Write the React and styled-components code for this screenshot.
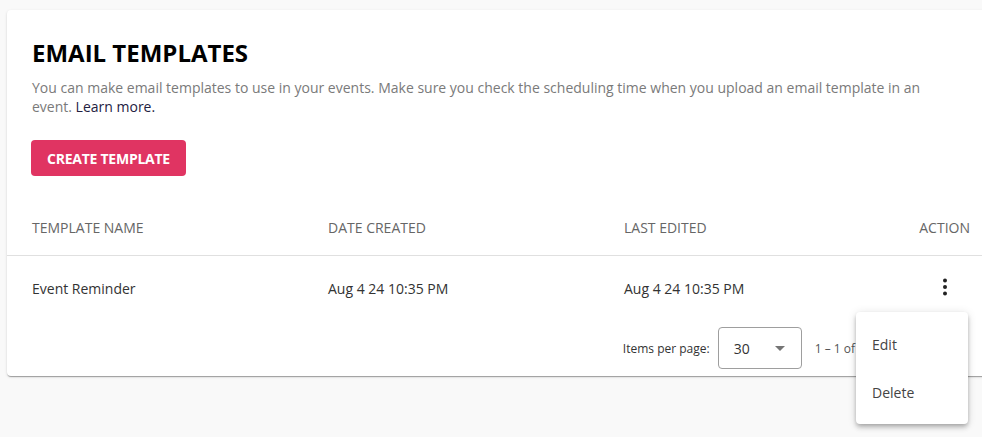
import React from 'react';
import styled, { createGlobalStyle } from 'styled-components';

const GlobalStyle = createGlobalStyle`
  html, body {
    margin: 0;
    padding: 0;
    overflow: hidden;
    background: #f9f9f9;
    font-family: 'Open Sans', 'Liberation Sans', sans-serif;
  }
`;

const Page = styled.div`
  padding: 10px 0 0 7px;
  min-height: 437px;
  box-sizing: border-box;
`;

const Card = styled.div`
  position: relative;
  width: 988px;
  background: #fff;
  border-radius: 4px;
  box-shadow: 0 2px 1px -1px rgba(0, 0, 0, 0.2), 0 1px 1px 0 rgba(0, 0, 0, 0.14),
    0 1px 3px 0 rgba(0, 0, 0, 0.12);
`;

const Intro = styled.div`
  padding: 26px 25px 0 25px;
`;

const Title = styled.h1`
  margin: 0;
  font-size: 24px;
  line-height: 33px;
  font-weight: 700;
  color: #000;
`;

const Description = styled.p`
  margin: 9px 0 0 0;
  max-width: 900px;
  font-size: 14px;
  line-height: 19px;
  color: #7a7a7a;
`;

const LearnMore = styled.a`
  color: #23213f;
  text-decoration: none;
  cursor: pointer;
`;

const PrimaryButton = styled.button`
  margin: 24px 0 0 -1px;
  height: 36px;
  padding: 0 16px;
  border: none;
  border-radius: 4px;
  background: #e03462;
  color: #fff;
  font-family: inherit;
  font-size: 14px;
  font-weight: 700;
  letter-spacing: -0.25px;
  cursor: pointer;
`;

const Table = styled.div`
  margin-top: 24px;
`;

const Row = styled.div`
  display: grid;
  grid-template-columns: 296px 296px 296px 1fr;
  align-items: center;
  height: ${(p) => p.height}px;
  border-bottom: ${(p) => (p.divider ? '1px solid #e0e0e0' : 'none')};
`;

const Cell = styled.div`
  padding: 0 ${(p) => (p.right ? '25px' : '0')} 0 ${(p) => (p.right ? '0' : '25px')};
  text-align: ${(p) => (p.right ? 'right' : 'left')};
  font-size: 14px;
  color: ${(p) => (p.head ? '#666' : '#333')};
  text-transform: ${(p) => (p.head ? 'uppercase' : 'none')};
`;

const KebabButton = styled.button`
  display: inline-flex;
  align-items: center;
  justify-content: center;
  width: 40px;
  height: 40px;
  margin: -2px 5px 0 0;
  border: none;
  background: transparent;
  cursor: pointer;
  padding: 0;
`;

const Paginator = styled.div`
  display: flex;
  align-items: center;
  justify-content: flex-end;
  height: 56px;
  padding-right: 18px;
  font-size: 12px;
  color: #333;
`;

const PageSizeLabel = styled.span`
  margin-right: 8px;
`;

const Select = styled.div`
  display: flex;
  align-items: center;
  justify-content: space-between;
  box-sizing: border-box;
  width: 84px;
  height: 42px;
  padding: 0 16px 0 15px;
  border: 1px solid #9e9e9e;
  border-radius: 4px;
  font-size: 14px;
  color: #333;
`;

const Arrow = styled.span`
  width: 0;
  height: 0;
  border-left: 5px solid transparent;
  border-right: 5px solid transparent;
  border-top: 5px solid #757575;
`;

const RangeLabel = styled.span`
  margin: 0 32px 0 13px;
  color: #555;
`;

const NavButton = styled.button`
  display: inline-flex;
  align-items: center;
  justify-content: center;
  width: 40px;
  height: 40px;
  padding: 0;
  border: none;
  background: transparent;
  color: rgba(0, 0, 0, 0.26);
`;

const Menu = styled.div`
  position: absolute;
  top: 302px;
  right: 27px;
  width: 112px;
  padding: 8px 0;
  background: #fff;
  border-radius: 4px;
  box-shadow: 0 2px 4px -1px rgba(0, 0, 0, 0.2), 0 4px 5px 0 rgba(0, 0, 0, 0.14),
    0 1px 10px 0 rgba(0, 0, 0, 0.12);
  z-index: 2;
`;

const MenuItem = styled.div`
  display: flex;
  align-items: center;
  height: 48px;
  padding: 0 16px;
  font-size: 14px;
  color: #444;
  cursor: pointer;
`;

const columns = ['Template Name', 'Date Created', 'Last Edited'];

const templates = [
  { name: 'Event Reminder', created: 'Aug 4 24 10:35 PM', edited: 'Aug 4 24 10:35 PM' },
];

const MoreIcon = () => (
  <svg width="20" height="24" viewBox="0 0 20 24">
    <circle cx="10" cy="5.5" r="2" fill="#222" />
    <circle cx="10" cy="12" r="2" fill="#222" />
    <circle cx="10" cy="18.5" r="2" fill="#222" />
  </svg>
);

const Chevron = ({ flip }) => (
  <svg width="24" height="24" viewBox="0 0 24 24" style={flip ? { transform: 'scaleX(-1)' } : null}>
    <path d="M15.41 7.41L14 6l-6 6 6 6 1.41-1.41L10.83 12z" fill="currentColor" />
  </svg>
);

const App = () => {
  return (
    <Page>
      <GlobalStyle />
      <Card>
        <Intro>
          <Title>EMAIL TEMPLATES</Title>
          <Description>
            You can make email templates to use in your events. Make sure you check the scheduling
            time when you upload an email template in an event. <LearnMore>Learn more.</LearnMore>
          </Description>
          <PrimaryButton>CREATE TEMPLATE</PrimaryButton>
        </Intro>
        <Table>
          <Row height={55} divider>
            {columns.map((c) => (
              <Cell head key={c}>{c}</Cell>
            ))}
            <Cell head right>Action</Cell>
          </Row>
          {templates.map((t) => (
            <Row height={64} key={t.name}>
              <Cell>{t.name}</Cell>
              <Cell>{t.created}</Cell>
              <Cell>{t.edited}</Cell>
              <Cell right>
                <KebabButton>
                  <MoreIcon />
                </KebabButton>
              </Cell>
            </Row>
          ))}
          <Paginator>
            <PageSizeLabel>Items per page:</PageSizeLabel>
            <Select>
              <span>30</span>
              <Arrow />
            </Select>
            <RangeLabel>1 – 1 of 1</RangeLabel>
            <NavButton disabled>
              <Chevron />
            </NavButton>
            <NavButton disabled>
              <Chevron flip />
            </NavButton>
          </Paginator>
        </Table>
        <Menu>
          <MenuItem>Edit</MenuItem>
          <MenuItem>Delete</MenuItem>
        </Menu>
      </Card>
    </Page>
  );
};

export default App;
